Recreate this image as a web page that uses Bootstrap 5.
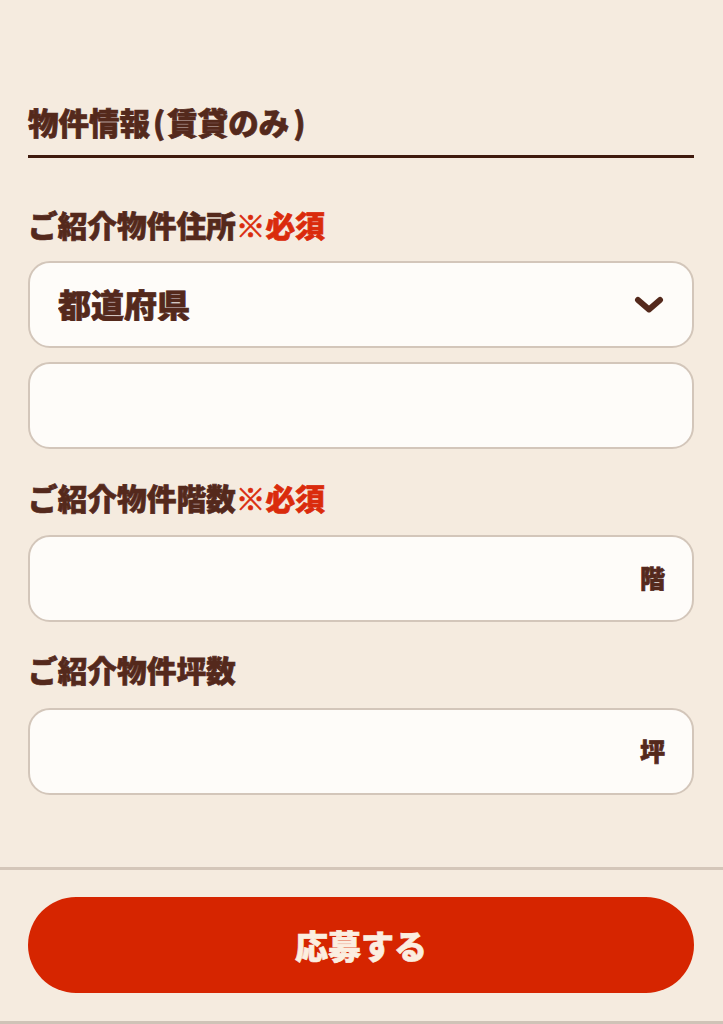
<!DOCTYPE html>
<html lang="ja">
<head>
<meta charset="utf-8">
<meta name="viewport" content="width=device-width, initial-scale=1">
<title>物件情報</title>
<link href="https://cdn.jsdelivr.net/npm/bootstrap@5.3.0/dist/css/bootstrap.min.css" rel="stylesheet">
<style>
html,body{height:100%;}
body{background:#f5ebdf;color:#54291c;font-family:"Noto Sans CJK JP",sans-serif;font-weight:900;overflow:hidden;}
.page-wrap{height:1024px;border-bottom:3px solid #cfc3b7;}
.form-area{padding:99px 29px 0 28px;height:870px;border-bottom:3px solid #d4c6b9;}
.sec-title,.field-label,.field-ctl,.unit-text,.cta{-webkit-text-stroke:.7px currentColor;}
.sec-title{font-size:30.5px;line-height:46px;font-weight:900;margin:0;padding-bottom:10px;border-bottom:3px solid #3f1a0e;color:#54291c;}
.paren-a{padding:0 2px 0 3px;}
.paren-b{padding:0 0 0 4px;}
.field-label{display:block;font-size:29.7px;line-height:44px;font-weight:900;}
.lab-a{margin:45px 0 14px;}
.lab-b{margin:27px 0 15px;}
.lab-c{margin:26px 0 16px;}
.req{color:#da2b0c;}
.field-box{position:relative;}
.field-ctl,.field-ctl:focus{height:87px;border:2px solid #d3c6ba;border-radius:22px;background:#fefcf9;box-shadow:none;color:#54291c;font-weight:900;font-size:33px;line-height:1;padding:0 60px 0 28px;background-image:none;}
.field-ctl:focus{border-color:#d3c6ba;}
.next-box{margin-top:14px;}
.chev{position:absolute;right:30px;top:35px;pointer-events:none;}
.unit-text{position:absolute;right:29px;top:30px;font-size:25px;line-height:1;}
.cta-wrap{padding:27px 29px 0 28px;}
.cta,.cta:hover,.cta:active{display:block;width:100%;height:96px;background:#d62500!important;color:#fbeee0!important;border:0;border-radius:48px;font-size:33px;font-weight:900;line-height:1;padding:0;}
</style>
</head>
<body>
<div class="page-wrap">
  <form class="form-area">
    <h2 class="sec-title">物件情報<span class="paren-a">(</span>賃貸のみ<span class="paren-b">)</span></h2>
    <label class="field-label lab-a" for="pref">ご紹介物件住所<span class="req">※必須</span></label>
    <div class="field-box">
      <select class="form-select field-ctl" id="pref"><option>都道府県</option></select>
      <svg class="chev" width="30" height="18" viewBox="0 0 30 18" aria-hidden="true"><path d="M4 4 L15 13.5 L26 4" fill="none" stroke="#54291c" stroke-width="6" stroke-linecap="round" stroke-linejoin="round"/></svg>
    </div>
    <div class="field-box next-box"><input class="form-control field-ctl" type="text" aria-label="住所"></div>
    <label class="field-label lab-b" for="floor">ご紹介物件階数<span class="req">※必須</span></label>
    <div class="field-box"><input class="form-control field-ctl" id="floor" type="text"><span class="unit-text">階</span></div>
    <label class="field-label lab-c" for="area">ご紹介物件坪数</label>
    <div class="field-box"><input class="form-control field-ctl" id="area" type="text"><span class="unit-text">坪</span></div>
  </form>
  <div class="cta-wrap"><button type="button" class="btn cta">応募する</button></div>
</div>
<script src="https://cdn.jsdelivr.net/npm/bootstrap@5.3.0/dist/js/bootstrap.bundle.min.js"></script>
</body>
</html>
